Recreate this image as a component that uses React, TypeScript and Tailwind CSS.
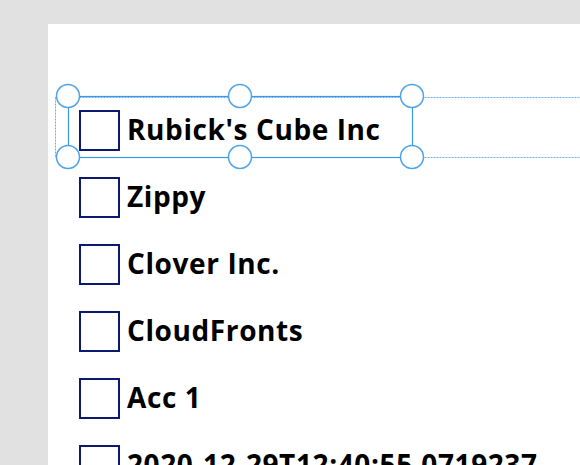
import React from 'react';

const items = [
  "Rubick's Cube Inc",
  'Zippy',
  'Clover Inc.',
  'CloudFronts',
  'Acc 1',
  '2020-12-29T12:40:55.0719237',
];

const handles: [number, number][] = [
  [68, 96], [240, 96], [412, 96],
  [68, 157], [240, 157], [412, 157],
];

export default function App() {
  return (
    <div className="relative w-[580px] h-[465px] overflow-hidden bg-[#e1e1e1] pt-[24px] pl-[48px]" style={{ fontFamily: '"Open Sans", "Noto Sans", sans-serif' }}>
      <div className="h-full w-full bg-white pt-[73px] pl-[31px]">
        {items.map(name => (
          <div key={name} className="h-[67px] flex items-center gap-[7px]">
            <div className="w-[41px] h-[41px] shrink-0 border-[2.5px] border-[#0b1970] bg-white" />
            <span className="text-[28px] font-bold tracking-[0.6px] text-black whitespace-nowrap leading-none mb-[3px]">{name}</span>
          </div>
        ))}
      </div>

      {/* selection adorner */}
      <svg className="absolute left-0 top-0 pointer-events-none" width="580" height="465">
        <line x1="55.5" y1="97.5" x2="580" y2="97.5" stroke="#6fb0ea" strokeWidth="1" strokeDasharray="2 1" />
        <line x1="55.5" y1="157.5" x2="580" y2="157.5" stroke="#6fb0ea" strokeWidth="1" strokeDasharray="2 1" />
        <line x1="55.5" y1="97.5" x2="55.5" y2="157.5" stroke="#6fb0ea" strokeWidth="1" strokeDasharray="2 1" />
        <rect x="68.5" y="96.5" width="344" height="61" fill="none" stroke="#3d97e4" strokeWidth="1.2" />
        {handles.map(([cx, cy]) => (
          <circle key={`${cx}-${cy}`} cx={cx} cy={cy} r="11.5" fill="white" stroke="#4ea4ea" strokeWidth="1.5" />
        ))}
      </svg>
    </div>
  );
}
